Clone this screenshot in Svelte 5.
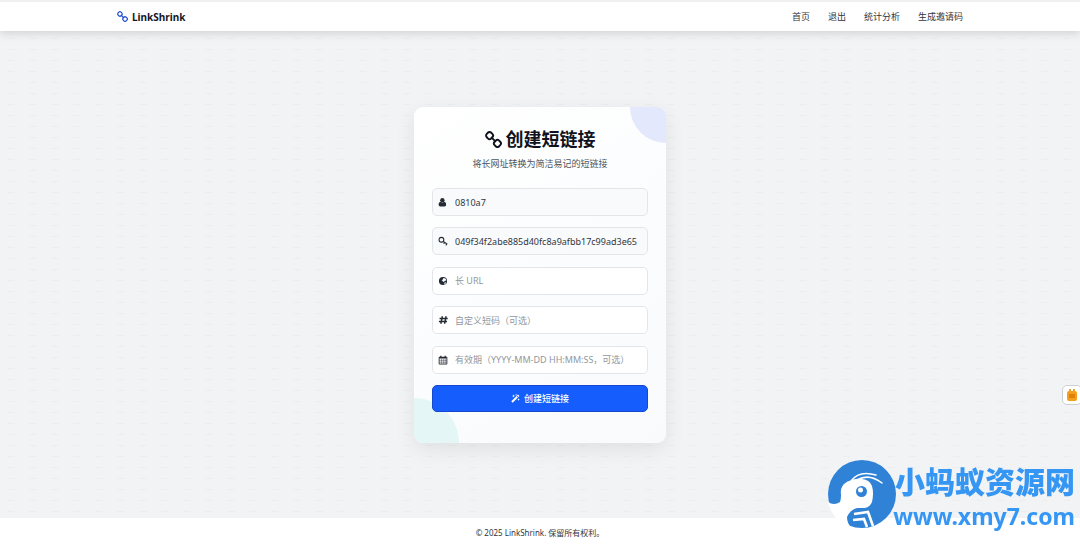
<script lang="ts">
	const navLinks = ['首页', '退出', '统计分析', '生成邀请码'];

	const fields = [
		{ id: 'username', icon: 'user', label: '用户名', placeholder: '', value: '0810a7', readonly: true },
		{
			id: 'token',
			icon: 'key',
			label: '密钥',
			placeholder: '',
			value: '049f34f2abe885d40fc8a9afbb17c99ad3e65',
			readonly: true
		},
		{ id: 'url', icon: 'globe', label: '长 URL', placeholder: '长 URL', value: '', readonly: false },
		{ id: 'code', icon: 'hash', label: '自定义短码', placeholder: '自定义短码（可选）', value: '', readonly: false },
		{
			id: 'expires',
			icon: 'calendar',
			label: '有效期',
			placeholder: '有效期（YYYY-MM-DD HH:MM:SS，可选）',
			value: '',
			readonly: false
		}
	];

	let values = $state(fields.map((f) => f.value));
</script>

{#snippet chain()}
	<svg class="chain" viewBox="0 0 16 16" fill="none" stroke="currentColor" stroke-width="1.8" aria-hidden="true">
		<rect x="1.300" y="1.300" width="6" height="6" rx="2.300" transform="rotate(45 4.300 4.300)" />
		<rect x="8.700" y="8.700" width="6" height="6" rx="2.300" transform="rotate(45 11.700 11.700)" />
		<path d="M5.800 5.800l4.400 4.400" />
	</svg>
{/snippet}

{#snippet fieldIcon(name: string)}
	<svg class="field-icon" viewBox="0 0 16 16" fill="currentColor" aria-hidden="true">
		{#if name === 'user'}
			<circle cx="7" cy="5" r="3.500" />
			<path d="M4 7.500C1.500 8 1 10 1 12.500Q1 15 3.500 15h7q2.500 0 2.500-2.500C13 10 12.500 8 10 7.500Q7 10 4 7.500z" />
		{:else if name === 'key'}
			<g fill="none" stroke="currentColor" stroke-width="1.700">
				<circle cx="5.500" cy="6" r="3.800" />
				<path d="M8 8.500l7 4.500M10.500 10l-1.500 2.500M14 12.500l-1.500 2.500" />
			</g>
		{:else if name === 'globe'}
			<path fill-rule="evenodd" d="M8 1.500a6.500 6.500 0 1 0 0 13a6.500 6.500 0 0 0 0-13zM8.500 3l3.500 1 1.500 3-2.500.5-1.500 2-2-1-1.500-2 2-1zM10.500 10.500l2.500-.5-1.500 3-1.500.5z" />
		{:else if name === 'hash'}
			<path d="M7 2L4.500 14M13 2l-2.500 12M2.500 5.500h13M1.500 10.500h13" fill="none" stroke="currentColor" stroke-width="2.300" />
		{:else}
			<g fill="none" stroke="currentColor">
				<path d="M1.800 3.500h12.400v11H1.800z" stroke-width="1.400" />
				<path d="M2 4.500h12" stroke-width="2.400" />
				<path d="M2 8.500h12M2 11.500h12M5.500 6v8M8.500 6v8M11.500 6v8" stroke-width="0.700" />
				<path d="M4.500 1v3M11.500 1v3" stroke-width="2" />
			</g>
		{/if}
	</svg>
{/snippet}

<div class="page">
	<header class="navbar">
		<a class="brand" href="/">{@render chain()}LinkShrink</a>
		<nav>
			{#each navLinks as link}
				<a href="/">{link}</a>
			{/each}
		</nav>
	</header>

	<main>
		<section class="card">
			<h1>{@render chain()}创建短链接</h1>
			<p class="subtitle">将长网址转换为简洁易记的短链接</p>
			<form onsubmit={(e) => e.preventDefault()}>
				{#each fields as field, i}
					<div class="field" class:filled={field.readonly}>
						<label for={field.id} aria-label={field.label}>{@render fieldIcon(field.icon)}</label>
						<input
							id={field.id}
							type="text"
							placeholder={field.placeholder}
							readonly={field.readonly}
							bind:value={values[i]}
						/>
					</div>
				{/each}
				<button class="submit" type="submit">
					<svg viewBox="0 0 16 16" fill="currentColor" aria-hidden="true">
						<path fill-rule="evenodd" d="M.5 13L12.500 1l2.500 2.500L3 15.500zM10.500 5l1 1L13 4.500l-1-1z" />
						<path d="M4.500 1l.8 1.700L7 3.500l-1.700.8L4.500 6l-.8-1.700L2 3.500l1.700-.8zM13.500 7.500l.6 1.900 1.900.6-1.900.6-.6 1.900-.6-1.900-1.900-.6 1.900-.6zM9 0l.5 1 1 .5-1 .5L9 3l-.5-1-1-.5 1-.5z" />
					</svg>
					创建短链接
				</button>
			</form>
		</section>
	</main>

	<footer>© 2025 LinkShrink. 保留所有权利。</footer>

	<button class="side-tab" aria-label="工具">
		<svg viewBox="0 0 10 12" aria-hidden="true">
			<path d="M2 0h2v2H2zM6 0h2v2H6z" fill="#e8a23a" />
			<rect x="0" y="2" width="10" height="10" rx="2" fill="#f5a01d" />
			<path d="M2 5h6v4H2z" fill="#dc820c" />
		</svg>
	</button>

	<div class="watermark">
		<svg class="ant" viewBox="0 0 68 68" aria-hidden="true">
			<circle cx="34" cy="34" r="34" fill="#2f82d6" />
			<path d="M0 42Q6 46 12 42Q13 40 13 35Q12 28 16 24Q19 21 24 20Q29 18 34 19Q42 20 44 26Q46 33 44 42Q42 47 37 48L29 48Q22 50 19 57Q19 63 23 67Q5 62 0 42z" fill="#fff" />
			<path d="M23 21Q31 10 48 15M29 20Q41 13 54 23" fill="none" stroke="#fff" stroke-width="1.500" stroke-linecap="round" />
			<circle cx="33.500" cy="31.500" r="5.500" fill="#2f82d6" />
			<circle cx="32.500" cy="30" r="2.500" fill="#fff" />
			<path d="M26 54l14-2 5 14M25 60l11-1 3 8" fill="none" stroke="#fff" stroke-width="2.600" />
		</svg>
		<div class="watermark-text">
			<strong>小蚂蚁资源网</strong>
			<span>www.xmy7.com</span>
		</div>
	</div>
</div>

<style>
	:global(body) {
		margin: 0;
	}

	.page {
		display: flex;
		flex-direction: column;
		min-height: 100vh;
		box-sizing: border-box;
		font-family: 'Noto Sans', 'Noto Sans CJK SC', sans-serif;
		font-size: 9px;
		color: #303640;
		background-color: #f1f3f5;
		background-image: radial-gradient(ellipse 4px 1px at 50% 50%, #ebedef 60%, transparent);
		background-size: 22px 11px;
	}

	a {
		color: inherit;
		text-decoration: none;
	}

	svg {
		flex: none;
	}

	.navbar {
		display: flex;
		align-items: center;
		justify-content: space-between;
		height: 31px;
		box-sizing: border-box;
		padding: 0 117px;
		border-top: 2px solid #eef0f2;
		background: #fff;
		box-shadow: 0 2px 10px rgba(0, 0, 0, 0.15);
	}

	.brand {
		display: flex;
		align-items: center;
		gap: 4px;
		font-size: 10px;
		font-weight: 700;
		color: #14171f;
	}

	.brand .chain {
		width: 11px;
		height: 11px;
		color: #2450c8;
	}

	nav {
		display: flex;
		gap: 18px;
	}

	main {
		flex: 1;
		display: flex;
		align-items: center;
		justify-content: center;
		padding-top: 1px;
	}

	.card {
		position: relative;
		width: 252px;
		box-sizing: border-box;
		padding: 18px 18px 31px;
		border-radius: 9px;
		overflow: hidden;
		background: linear-gradient(145deg, #fff, #f8fafc);
		box-shadow: 0 6px 20px rgba(0, 0, 0, 0.08);
	}

	.card::before,
	.card::after {
		content: '';
		position: absolute;
		border-radius: 50%;
	}

	.card::before {
		top: -36px;
		right: -36px;
		width: 72px;
		height: 72px;
		background: #e3e8fd;
	}

	.card::after {
		bottom: -45px;
		left: -45px;
		width: 90px;
		height: 90px;
		background: #e4f6f5;
	}

	h1 {
		display: flex;
		align-items: center;
		justify-content: center;
		gap: 4px;
		margin: 0;
		font-size: 18px;
		line-height: 28px;
		color: #10131c;
	}

	h1 .chain {
		width: 17px;
		height: 17px;
	}

	.subtitle {
		margin: 3px 0 17px;
		line-height: 15px;
		text-align: center;
		color: #4b5560;
	}

	form {
		position: relative;
		z-index: 1;
		display: flex;
		flex-direction: column;
		justify-content: space-between;
		min-height: 224px;
	}

	.field {
		display: flex;
		align-items: center;
		gap: 7px;
		height: 28px;
		box-sizing: border-box;
		padding: 0 9px 0 5px;
		border: 1px solid #e2e5e9;
		border-radius: 5px;
		background: #fff;
	}

	.field.filled {
		background: #f8fafc;
	}

	label {
		display: flex;
		color: #252c36;
	}

	.field-icon {
		width: 10px;
		height: 10px;
	}

	input {
		flex: 1;
		min-width: 0;
		padding: 0;
		border: 0;
		outline: 0;
		background: transparent;
		font: inherit;
		color: #303640;
	}

	input::placeholder {
		color: #92979e;
		opacity: 1;
	}

	.submit {
		display: flex;
		align-items: center;
		justify-content: center;
		gap: 4px;
		height: 27px;
		border: 1px solid #1746cf;
		border-radius: 5px;
		background: #155dfc;
		font: inherit;
		font-weight: 500;
		color: #fff;
	}

	.submit svg {
		width: 9px;
		height: 9px;
	}

	footer {
		padding: 9px 8px 7px;
		background: #fff;
		font-size: 8px;
		line-height: 12px;
		text-align: center;
	}

	.side-tab {
		position: fixed;
		right: -2px;
		bottom: 141px;
		display: flex;
		padding: 3px 4px;
		border: 1px solid #ccd0d5;
		border-radius: 5px;
		background: #fff;
	}

	.side-tab svg {
		width: 10px;
		height: 12px;
	}

	.watermark {
		position: fixed;
		right: 5px;
		bottom: 14px;
		display: flex;
		align-items: flex-start;
		color: #3596f3;
	}

	.ant {
		width: 68px;
		height: 68px;
	}

	.watermark-text {
		display: flex;
		flex-direction: column;
		align-items: flex-end;
		margin-left: -3px;
		padding-top: 4px;
	}

	.watermark strong {
		font-size: 30px;
		font-weight: 900;
		line-height: 36px;
	}

	.watermark span {
		font-size: 23px;
		font-weight: 700;
		line-height: 32px;
	}
</style>
